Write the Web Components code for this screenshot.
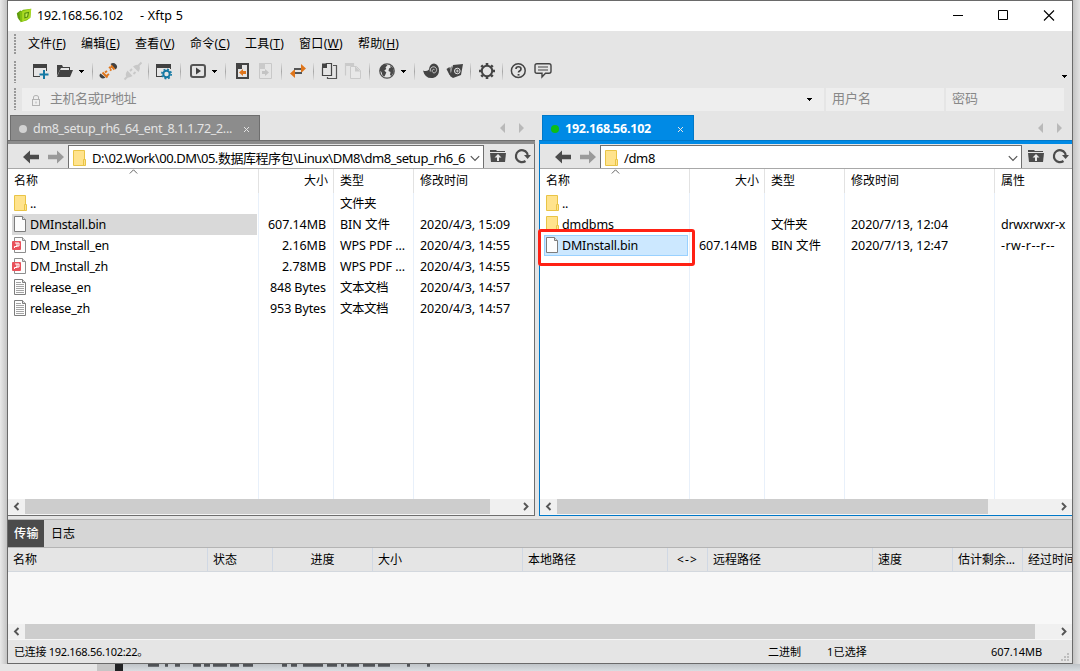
<!DOCTYPE html>
<html lang="zh-CN">
<head>
<meta charset="utf-8">
<title>192.168.56.102 - Xftp 5</title>
<style>
  body {
    margin: 0;
    width: 1080px;
    height: 671px;
    overflow: hidden;
    background: #d9dde0;
    font: 12px/16px "Noto Sans", "Noto Sans CJK SC", sans-serif;
    color: #000;
  }
</style>
</head>
<body>
<desktop-page>
  <app-window>
    <title-bar></title-bar>
    <menu-bar></menu-bar>
    <tool-bar></tool-bar>
    <address-bar></address-bar>
    <split-view>
      <file-pane source="local">
        <pane-tab slot="tab" style="width: 250px"><fit-text w="199">dm8_setup_rh6_64_ent_8.1.1.72_2...</fit-text></pane-tab>
        <fit-text slot="path" w="373">D:\02.Work\00.DM\05.数据库程序包\Linux\DM8\dm8_setup_rh6_6</fit-text>
      </file-pane>
      <file-pane source="remote" active>
        <pane-tab slot="tab" active style="width: 152px"><fit-text w="86">192.168.56.102</fit-text></pane-tab>
        <fit-text slot="path" w="31">/dm8</fit-text>
      </file-pane>
    </split-view>
    <transfer-panel></transfer-panel>
    <status-bar></status-bar>
  </app-window>
</desktop-page>

<script>
const ICONS = {
  logo: `<path d="M2 7l4-3 2 1v11l-3-1-2-3z" fill="#5f9d0c"/><path d="M5 6l4-3 9-1-1 10-4 3-7 2z" fill="#7fbd10"/><path d="M8 5l10-3-1 10-9 4z" fill="#a9d922"/><path d="M11 7l4-1-1 5-3 1z" fill="#c9ee55" stroke="#4f8a0a" stroke-width="1.200"/>`,
  session: `<path d="M3 3h14v7h-1V7H4v8h6v1H3z" fill="#414141"/><path d="M14 9v9M9.5 13.500h9" stroke="#1479a4" stroke-width="2"/>`,
  open: `<path d="M2 15V4h5l1 2h7v3h-1V7H6z" fill="#414141"/><path d="M5 9h13l-3 7H2z" fill="#414141"/>`,
  connect: `<path d="M12.500 3q3-2 5.500.5t-.5 5z" fill="#414141"/><path d="M2.500 12.500q-2 2 0 4t5 0z" fill="#414141"/><path d="M13 4.500l3.500 4M4.500 11.500l5 5M11 6l2 1.500M13.500 9.500l-1.500-1M7 11.500l2-1.500M9 14.500l2-1.500" stroke="#df751b" stroke-width="2"/>`,
  disconnect: `<path d="M10 5.500q4-3 6-1t-.5 6.500zM4.500 9.500q-3 4-1 6t6-.5z" fill="#c8c8c8"/><path d="M1.500 18.500l4-4M15 5l3.500-3.500M7 10l2-2M10.500 13l2-2" stroke="#c8c8c8" stroke-width="1.800"/>`,
  property: `<path d="M2 3h15v5h-1V7H3v8h5v1H2z" fill="#414141"/><circle cx="12.500" cy="13" r="3.200" fill="none" stroke="#1479a4" stroke-width="2"/><circle cx="12.500" cy="13" r="4.700" fill="none" stroke="#1479a4" stroke-width="1.600" stroke-dasharray="1.850 1.850"/>`,
  run: `<rect x="3" y="4" width="14" height="12" rx="2" fill="none" stroke="#555" stroke-width="2"/><path d="M8 6.500l5 3.500-5 3.500z" fill="#414141"/>`,
  docIn: `<path d="M5 7l4-4h7v14H5z" fill="none" stroke="#444" stroke-width="2"/><path d="M4 8V2h6v6z" fill="#444"/><path d="M7 11.500l4-3.500v2h3v3h-3v2z" fill="#df751b"/>`,
  docOut: `<path d="M4.500 7.500l5-5h7v15h-12z" fill="none" stroke="#c8c8c8"/><path d="M4 8V2h6v6z" fill="#cacaca"/><path d="M14 11.500l-4-3.500v2H7v3h3v2z" fill="#c4c4c4"/>`,
  sync: `<path d="M2 12.500l5-4.500v9z" fill="#df751b"/><path d="M18 7.500l-5-4.500v9z" fill="#df751b"/><path d="M6 8h7M7 12h7" stroke="#555" stroke-width="1.800"/>`,
  copy: `<path d="M3.500 6.500l4-4h5v12h-9z" fill="none" stroke="#444" stroke-width="1.200"/><path d="M3 7V2.500h5V7z" fill="#444"/><path d="M14 4.500h3.500v13h-9V16" fill="none" stroke="#555" stroke-width="1.200"/>`,
  paste: `<path d="M2.500 14.500v-12h8V5" fill="none" stroke="#cacaca" stroke-width="1.200"/><path d="M2 2h9v3H2z" fill="#cacaca"/><path d="M7.500 5.500h6l4 4v8h-10z" fill="#e8e8e8" stroke="#cacaca"/><path d="M12 5v5.500h5.500z" fill="#cacaca"/>`,
  globe: `<circle cx="10" cy="10" r="7.200" fill="#e5e5e5" stroke="#505050" stroke-width="1.300"/><path d="M4 5.500l3.500-2.300 3 .8-2 2.500.8 1.500-2 1.500 2 2-1.800 4-2-1-1-3.500-1.800-1.500zM13 4l3 3 .8 4-2.300 4-1.500-1 .5-3-2-1 .5-2.500 1.700-1z" fill="#484848"/>`,
  shell: `<path d="M2 9.500q3.500 1.500 6-1Q8.500 3 13 2.500q5 1 5 7T12 17q-8 1-10-7.500z" fill="#444"/><path d="M9.300 10.500C8.500 6 13 4.500 15 7s-1 6-3 4.500 0-4 1.500-2.800" fill="none" stroke="#d8d8d8" stroke-width=".9"/>`,
  agent: `<path d="M1.500 8l3-2 2 9-2-1zM8 4l10-1-2 11-8 3-3-2z" fill="#444"/><path d="M5 7l2-2-1 8z" fill="#777"/><circle cx="12.300" cy="10" r="2.800" fill="none" stroke="#e5e5e5"/><path d="M12.300 8.500v3M10.800 10h3" stroke="#e5e5e5" stroke-width=".8"/>`,
  gear: `<circle cx="10" cy="10" r="5.200" fill="none" stroke="#444" stroke-width="2"/><path d="M10 2v2.500M10 15.500V18M2 10h2.500M15.500 10H18M4.300 4.300l1.500 1.500M14.200 14.200l1.500 1.500M15.700 4.300l-1.500 1.500M5.800 14.200l-1.500 1.500" stroke="#444" stroke-width="2.600"/>`,
  help: `<circle cx="10.300" cy="9.700" r="6.900" fill="none" stroke="#444" stroke-width="1.500"/><path d="M8 8c0-3 5-3 5 0 0 2-2.500 2-2.500 3.500" fill="none" stroke="#444" stroke-width="1.700"/><path d="M9.600 13h1.900v1.600H9.600z" fill="#444"/>`,
  chat: `<path d="M4 2.800h12q2 0 2 2v5.400q0 2-2 2h-3.500L9 16v-3.800H4q-2 0-2-2V4.800q0-2 2-2z" fill="none" stroke="#444" stroke-width="1.400"/><path d="M5 6h10M5 9h10" stroke="#444" stroke-width="1.200"/>`,
  lock: `<rect x="6.500" y="9.500" width="7" height="6" fill="none" stroke="#b2b2b2"/><path d="M7.500 9V7q0-1.500 2.500-1.500T12.500 7v2M10 11.500v2" fill="none" stroke="#b2b2b2"/>`,
  back: `<path d="M2 10l7-6.500v4.300h9v4.400H9v4.300z" fill="#4c4c4c"/>`,
  forward: `<path d="M18 10l-7-6.500v4.300H2v4.400h9v4.300z" fill="#9a9a9a"/>`,
  folder: `<path d="M4.500 2.500h11v15h-11z" fill="#ffe38d" stroke="#e9c446"/><path d="M14.500 11.500h2v6h-2z" fill="#ffe38d" stroke="#e9c446"/>`,
  up: `<path d="M2 5V3h6l1 1h8v1z" fill="#4c4c4c"/><path d="M2 6h16l-1 9H3z" fill="#4c4c4c"/><path d="M10 7l3.500 3.500H11V14H9v-3.500H6.500z" fill="#e8e8e8"/>`,
  reload: `<path d="M13.500 15A6 6 0 1115 7l.7 2" fill="none" stroke="#4c4c4c" stroke-width="2.200"/><path d="M12 9h7l-3.400 4z" fill="#4c4c4c"/>`,
  file: `<path d="M4.500 2.500h8l3 3v12h-11z" fill="#fdfdfd" stroke="#7d7d7d"/><path d="M12.500 2.500v3h3" fill="#ddd" stroke="#7d7d7d"/>`,
  pdf: `<path d="M4.500 2.500h8l3 3v12h-11z" fill="#fdfdfd" stroke="#8d8d8d"/><path d="M12.500 2.500v3h3" fill="#ddd" stroke="#8d8d8d"/><rect x="2" y="6" width="9" height="9" rx="1" fill="#e9525b"/><path d="M5 8h4v3H6M7 8v3.500H4.500V13" fill="none" stroke="#fff"/>`,
  text: `<path d="M4.500 2.500h8l3 3v12h-11z" fill="#fdfdfd" stroke="#7d7d7d"/><path d="M12.500 2.500v3h3" fill="#ddd" stroke="#7d7d7d"/><path d="M6 5.500h5M6 7.500h8M6 9.500h8M6 11.500h8M6 13.500h8M6 15.500h8" stroke="#a4a4a4"/>`
};

// each row: file icon, then [text, width] for its cells
const LISTS = {
  local: {
    cols: '251px 75px 80px 1fr',
    thumb: 465,
    head: [['名称', 24], ['大小', 24], ['类型', 24], ['修改时间', 48]],
    rows: [
      ['folder', ['..', 6], null, ['文件夹', 36], null],
      ['file', ['DMInstall.bin', 76], ['607.14MB', 58], ['BIN 文件', 50], ['2020/4/3, 15:09', 90]],
      ['pdf', ['DM_Install_en', 79], ['2.16MB', 44], ['WPS PDF ...', 65], ['2020/4/3, 14:55', 90]],
      ['pdf', ['DM_Install_zh', 78], ['2.78MB', 44], ['WPS PDF ...', 65], ['2020/4/3, 14:55', 90]],
      ['text', ['release_en', 61], ['848 Bytes', 56], ['文本文档', 48], ['2020/4/3, 14:57', 90]],
      ['text', ['release_zh', 60], ['953 Bytes', 56], ['文本文档', 48], ['2020/4/3, 14:57', 90]]
    ],
    selected: 1
  },
  remote: {
    cols: '150px 75px 80px 150px 1fr',
    thumb: 431,
    head: [['名称', 24], ['大小', 24], ['类型', 24], ['修改时间', 48], ['属性', 24]],
    rows: [
      ['folder', ['..', 6], null, null, null, null],
      ['folder', ['dmdbms', 52], null, ['文件夹', 36], ['2020/7/13, 12:04', 97], ['drwxrwxr-x', 64]],
      ['file', ['DMInstall.bin', 76], ['607.14MB', 58], ['BIN 文件', 50], ['2020/7/13, 12:47', 97], ['-rw-r--r--', 54]]
    ],
    selected: 2
  }
};

const fit = (cell) => cell ? `<fit-text w="${cell[1]}">${cell[0]}</fit-text>` : '';

class BaseElement extends HTMLElement {
  constructor() {
    super();
    this.attachShadow({ mode: 'open' });
  }
  connectedCallback() {
    this.shadowRoot.innerHTML = this.render();
  }
}

class DesktopPage extends BaseElement {
  render() {
    return `
      <style>
        :host {
          display: block;
          position: relative;
          box-sizing: border-box;
          height: 671px;
          padding-left: 7px;
          background: linear-gradient(90deg, #e9e9e9, #c4c4c4 7px, #c4c4c4 1073px, #e2e2e2 1080px);
        }
        .page {
          position: absolute;
          left: 0;
          right: 0;
          bottom: 0;
          height: 7px;
          background: linear-gradient(#bfc4c8, #d9dde1);
        }
        .page svg { display: block; }
      </style>
      <div class="page">
        <svg width="1080" height="7">
          <path d="M0 0h97v7H0z" fill="#e6e6e6"/>
          <path d="M97 0h18v7H97z" fill="#c5c5c5"/>
          <path d="M115 0h8v7h-8z" fill="#202123"/>
          <path d="M148 1.200h11M165 1.200h3M175 1.200h5M193 1.200h8M204 1.200h6M213 1.200h14M230 1.200h9M243 1.200h10M282 1.200h5M291 1.200h6M303 1.200h20M327 1.200h10M341 1.200h3M347 1.200h12M363 1.200h12M378 1.200h12M407 1.200h3M427 1.200h3" stroke="#33363a" stroke-width="3" opacity=".8"/>
        </svg>
      </div>
      <slot></slot>
    `;
  }
}

class AppWindow extends BaseElement {
  render() {
    return `
      <style>
        :host {
          display: flex;
          flex-direction: column;
          position: relative;
          box-sizing: border-box;
          width: 1066px;
          height: 664px;
          border: 1px solid #6a6a6a;
          background: #e5e5e5;
          overflow: hidden;
        }
      </style>
      <slot></slot>
    `;
  }
}

class TitleBar extends BaseElement {
  render() {
    return `
      <style>
        :host {
          display: flex;
          align-items: center;
          height: 30px;
          background: #fff;
          font-size: 12.500px;
        }
        ui-icon { margin-left: 7px; --size: 18px; }
        .host { margin-left: 4px; }
        .app { margin-left: 17px; }
        .controls { margin-left: auto; display: block; }
      </style>
      <ui-icon name="logo"></ui-icon>
      <fit-text class="host" w="86">192.168.56.102</fit-text>
      <fit-text class="app" w="43">- Xftp 5</fit-text>
      <svg class="controls" width="138" height="30" fill="none" stroke="#000">
        <path d="M19 14.500h10"/>
        <path d="M64.500 9.500h9v9h-9z"/>
        <path d="M110 9.500l10 10M120 9.500l-10 10" stroke-width="1.100"/>
      </svg>
    `;
  }
}

class MenuBar extends BaseElement {
  render() {
    const menus = [['文件', 'F', 38, 53], ['编辑', 'E', 39, 54], ['查看', 'V', 40, 55], ['命令', 'C', 40, 55],
      ['工具', 'T', 39, 54], ['窗口', 'W', 44, 59], ['帮助', 'H', 41, 56]];
    return `
      <style>
        :host {
          display: flex;
          align-items: center;
          height: 26px;
          flex-shrink: 0;
        }
        u { text-underline-offset: 1px; }
        .menu { display: flex; }
        bar-grip { margin-right: 12px; height: 20px; }
      </style>
      <bar-grip></bar-grip>
      ${menus.map(([text, key, w, step]) => `<div class="menu" style="width: ${step}px"><fit-text w="${w}">${text}(<u>${key}</u>)</fit-text></div>`).join('')}
    `;
  }
}

class BarGrip extends BaseElement {
  render() {
    return `
      <style>
        :host {
          display: block;
          width: 2px;
          height: 22px;
          margin-left: 6px;
          flex-shrink: 0;
          background: repeating-linear-gradient(#999 0 2px, transparent 2px 3px);
        }
      </style>
    `;
  }
}

class ToolBar extends BaseElement {
  render() {
    // icon name (or | for a separator, v for a drop arrow) and the gap before it
    const items = [['session', 14], ['open', 5], ['v', 4], ['|', 7], ['connect', 5], ['disconnect', 5], ['|', 5],
      ['property', 5], ['|', 6], ['run', 7], ['v', 4], ['|', 7], ['docIn', 6], ['docOut', 3], ['|', 6], ['sync', 6],
      ['|', 5], ['copy', 5], ['paste', 4], ['|', 6], ['globe', 7], ['v', 4], ['|', 7], ['shell', 6], ['agent', 4],
      ['|', 5], ['gear', 6], ['|', 5], ['help', 5], ['chat', 5]];
    const item = ([name, gap]) => {
      if (name === '|') return `<i style="margin-left: ${gap}px"></i>`;
      if (name === 'v') return `<drop-arrow style="margin-left: ${gap}px"></drop-arrow>`;
      return `<ui-icon name="${name}" style="margin-left: ${gap}px"></ui-icon>`;
    };
    return `
      <style>
        :host {
          display: flex;
          align-items: center;
          height: 29px;
          flex-shrink: 0;
        }
        ui-icon { margin-top: -1px; }
        i {
          width: 1px;
          height: 17px;
          background: linear-gradient(#ddd, #a8a8a8, #ddd);
        }
        .more { margin: 10px 5px 0 auto; }
      </style>
      <bar-grip></bar-grip>
      ${items.map(item).join('')}
      <drop-arrow class="more"></drop-arrow>
    `;
  }
}

class DropArrow extends BaseElement {
  render() {
    return `
      <style>
        :host { display: block; width: 5px; height: 3px; margin-right: 1px; }
        svg { display: block; }
      </style>
      <svg width="5" height="3" shape-rendering="crispEdges"><path d="M0 0h5v1H4v1H3v1H2V2H1V1H0z"/></svg>
    `;
  }
}

class AddressBar extends BaseElement {
  render() {
    return `
      <style>
        :host {
          display: flex;
          align-items: flex-start;
          box-sizing: border-box;
          height: 29px;
          padding-top: 2px;
          flex-shrink: 0;
          color: #888;
          font-size: 13px;
        }
        .field {
          display: flex;
          align-items: center;
          box-sizing: border-box;
          height: 23px;
          background: #eee;
          margin-right: 2px;
          padding-left: 6px;
          width: 118px;
        }
        .field fit-text { margin-bottom: 3px; }
        .host { width: 802px; margin-left: 6px; padding: 0 11px 0 4px; }
        .host fit-text { margin-left: 4px; }
        drop-arrow { margin-left: auto; }
      </style>
      <bar-grip></bar-grip>
      <div class="field host">
        <ui-icon name="lock"></ui-icon>
        <fit-text w="86">主机名或IP地址</fit-text>
        <drop-arrow></drop-arrow>
      </div>
      <div class="field"><fit-text w="39">用户名</fit-text></div>
      <div class="field"><fit-text w="26">密码</fit-text></div>
    `;
  }
}

class SplitView extends BaseElement {
  render() {
    return `
      <style>
        :host {
          display: grid;
          grid-template-columns: 527px 533px;
          gap: 4px;
          height: 401px;
          flex-shrink: 0;
        }
      </style>
      <slot></slot>
    `;
  }
}

class PaneTab extends BaseElement {
  render() {
    return `
      <style>
        :host {
          display: flex;
          align-items: center;
          box-sizing: border-box;
          height: 25px;
          padding: 2px 9px 0 8px;
          border: 1px solid #6e6e6e;
          border-bottom: 0;
          background: #8c8c8c;
          color: #e4e4e4;
          font-size: 12.500px;
          flex-shrink: 0;
        }
        :host([active]) {
          background: #008ae5;
          border-color: #0078c8;
          color: #fff;
          font-weight: bold;
        }
        .dot {
          width: 8px;
          height: 8px;
          margin-right: 6px;
          flex-shrink: 0;
          border-radius: 50%;
          background: #d2d2d2;
        }
        :host([active]) .dot { background: #0dbd17; }
        svg { margin-left: auto; flex-shrink: 0; }
      </style>
      <span class="dot"></span>
      <slot></slot>
      <svg width="7" height="7"><path d="M1 1l5 5M6 1L1 6" stroke="#e4e4e4"/></svg>
    `;
  }
}

class FilePane extends BaseElement {
  render() {
    const source = this.getAttribute('source');
    return `
      <style>
        :host {
          --edge: #8c8c8c;
          --edge-dark: #6e6e6e;
          display: grid;
          grid-template-rows: 25px 4px 371px 1px;
          position: relative;
          min-width: 0;
        }
        :host([active]) {
          --edge: #008ae5;
          --edge-dark: #0078c8;
        }
        .tabs { display: flex; padding: 0 10px 0 2px; align-items: center; }
        :host([active]) .tabs { padding-left: 3px; padding-right: 9px; }
        .tabs svg { margin-left: auto; }
        .line { box-sizing: border-box; background: var(--edge); border-top: 1px solid var(--edge-dark); }
        .main {
          display: grid;
          grid-template-rows: 25px 330px 16px;
          grid-template-columns: minmax(0, 1fr);
          border-right: 1px solid var(--edge-dark);
        }
        :host([active]) .main { border-right: 0; border-left: 1px solid var(--edge-dark); }
        .bottom { background: var(--edge-dark); }
        .mark {
          display: none;
          position: absolute;
          box-sizing: border-box;
          left: -1px;
          top: 114px;
          width: 157px;
          height: 37px;
          border: 3px solid #ff2114;
          border-radius: 3px;
        }
        :host([active]) .mark { display: block; }
      </style>
      <div class="tabs">
        <slot name="tab"></slot>
        <svg width="25" height="10"><path d="M5 0v10L0 5zM19 0v10l5-5z" fill="#b9b9b9"/></svg>
      </div>
      <div class="line"></div>
      <div class="main">
        <path-bar><slot name="path"></slot></path-bar>
        <file-list source="${source}"></file-list>
        <scroll-bar thumb="${LISTS[source].thumb}"></scroll-bar>
      </div>
      <div class="bottom"></div>
      <div class="mark"></div>
    `;
  }
}

class PathBar extends BaseElement {
  render() {
    return `
      <style>
        :host {
          display: flex;
          box-sizing: border-box;
          height: 25px;
          padding-left: 13px;
          border-bottom: 1px solid #a8a8a8;
          background: #e5e5e5;
          font-size: 13px;
        }
        ui-icon { margin-top: 3px; }
        .forward { margin: 3px 2px 0 5px; }
        .path {
          display: flex;
          flex: 1;
          min-width: 0;
          box-sizing: border-box;
          border: 1px solid #707070;
          border-bottom: 0;
          margin-top: 1px;
          background: #fff;
        }
        .path ui-icon { margin-top: 2px; }
        .value { flex: 1; min-width: 0; padding: 4px 0 0 3px; }
        .path svg { margin: 9px 3px 0 2px; flex-shrink: 0; }
        .up { margin-left: 4px; }
        .reload { margin: 2px 2px 0 4px; }
      </style>
      <ui-icon name="back"></ui-icon>
      <ui-icon class="forward" name="forward"></ui-icon>
      <div class="path">
        <ui-icon name="folder"></ui-icon>
        <div class="value"><slot></slot></div>
        <svg width="10" height="7"><path d="M.8 1.200L5 5.400l4.200-4.200" fill="none" stroke="#555" stroke-width="1.200"/></svg>
      </div>
      <ui-icon class="up" name="up"></ui-icon>
      <ui-icon class="reload" name="reload"></ui-icon>
    `;
  }
}

class FileList extends BaseElement {
  render() {
    const source = this.getAttribute('source');
    const list = LISTS[source];
    const row = ([icon, name, ...cells], i) => `
      <div class="row">
        <div class="cell name ${i === list.selected ? 'selected' : ''}"><ui-icon name="${icon}"></ui-icon>${fit(name)}</div>
        ${cells.map((cell) => `<div class="cell">${fit(cell)}</div>`).join('')}
      </div>`;
    return `
      <style>
        :host {
          display: flex;
          flex-direction: column;
          position: relative;
          background: #fff;
          font-size: 12.500px;
        }
        .row {
          display: grid;
          grid-template-columns: ${list.cols};
          height: 21px;
        }
        .head { height: 24px; font-size: 12px; }
        .fill { flex: 1; height: auto; }
        .cell {
          display: flex;
          align-items: center;
          box-sizing: border-box;
          min-width: 0;
          padding-left: 6px;
          border-right: 1px solid #e8f0fa;
          position: relative;
        }
        .head .cell { border-color: #e2e2e2; }
        .cell:last-child { border-right: 0; }
        .cell:nth-child(2) { justify-content: flex-end; padding-right: 7px; }
        .head .cell:nth-child(2) { padding-right: 5px; }
        .name ui-icon { margin-top: -1px; }
        .row .name { padding-left: 2px; }
        .selected { z-index: 0; }
        .selected::before {
          content: "";
          position: absolute;
          z-index: -1;
          inset: 0 1px 0 4px;
          background: ${source === 'local' ? '#d9d9d9' : '#cce8ff'};
          ${source === 'local' ? '' : 'border: 1px solid #99d1ff;'}
        }
        .sort { position: absolute; left: ${source === 'local' ? 121 : 71}px; top: 0; }
      </style>
      <div class="row head">${list.head.map((cell) => `<div class="cell">${fit(cell)}</div>`).join('')}</div>
      ${list.rows.map(row).join('')}
      <div class="row fill">${list.head.map(() => '<div class="cell"></div>').join('')}</div>
      <svg class="sort" width="9" height="5"><path d="M.8 4.500l3.700-3.700 3.700 3.700" fill="none" stroke="#666"/></svg>
    `;
  }
}

class ScrollBar extends BaseElement {
  render() {
    return `
      <style>
        :host {
          display: flex;
          justify-content: space-between;
          height: 15px;
          background: #f0f0f0;
          border-bottom: 1px solid #f6f6f6;
        }
        svg { display: block; }
        .thumb { width: ${this.getAttribute('thumb')}px; margin-right: auto; background: #cdcdcd; }
      </style>
      <svg width="17" height="15"><path d="M10.500 4L7 7.500l3.500 3.500" fill="none" stroke="#555" stroke-width="1.900"/></svg>
      <div class="thumb"></div>
      <svg width="17" height="15"><path d="M7 4l3.500 3.500L7 11" fill="none" stroke="#555" stroke-width="1.900"/></svg>
    `;
  }
}

class TransferPanel extends BaseElement {
  render() {
    const heads = [['名称', 24], ['状态', 24], ['进度', 24], ['大小', 24], ['本地路径', 48], ['&lt;-&gt;', 21],
      ['远程路径', 48], ['速度', 24], ['估计剩余...', 57], ['经过时间', 48]];
    return `
      <style>
        :host {
          display: grid;
          grid-template-rows: 27px 25px 52px 16px;
          margin-top: 3px;
          border-top: 1px solid #b4b4b4;
          flex-shrink: 0;
        }
        .tabs { display: flex; background: #d6d6d6; }
        .tab { display: flex; align-items: center; padding: 0 6px 0 7px; }
        .on { padding: 0 5px 0 6px; background: #4b4b4b; color: #fff; font-weight: 500; }
        .head {
          display: grid;
          grid-template-columns: 200px 65px 100px 150px 145px 40px 165px 80px 70px 1fr;
          box-sizing: border-box;
          border-top: 1px solid #b4b4b4;
          border-bottom: 1px solid #d3d8de;
        }
        .cell {
          display: flex;
          align-items: center;
          box-sizing: border-box;
          min-width: 0;
          padding-left: 5px;
          border-right: 1px solid #d0d8e4;
        }
        .cell:last-child { border-right: 0; overflow: hidden; }
        .cell:nth-child(3), .cell:nth-child(6) { justify-content: center; padding-left: 0; }
        .list { background: #f8f8f8; }
      </style>
      <div class="tabs">
        <div class="tab on"><fit-text w="25">传输</fit-text></div>
        <div class="tab"><fit-text w="24">日志</fit-text></div>
      </div>
      <div class="head">${heads.map((cell) => `<div class="cell">${fit(cell)}</div>`).join('')}</div>
      <div class="list"></div>
      <scroll-bar thumb="1010"></scroll-bar>
    `;
  }
}

class StatusBar extends BaseElement {
  render() {
    return `
      <style>
        :host {
          display: grid;
          grid-template-columns: 754px 59px 164px 1fr;
          align-items: center;
          box-sizing: border-box;
          flex: 1;
          padding: 1px 0 0 6px;
          position: relative;
          font-size: 11px;
        }
        svg { position: absolute; right: 2px; bottom: 2px; }
      </style>
      <fit-text w="134">已连接 192.168.56.102:22。</fit-text>
      <fit-text w="33">二进制</fit-text>
      <fit-text w="40">1已选择</fit-text>
      <fit-text w="51">607.14MB</fit-text>
      <svg width="9" height="8"><path d="M6 0h2v2H6zM3 3h2v2H3zM6 3h2v2H6zM0 6h2v2H0zM3 6h2v2H3zM6 6h2v2H6z" fill="#bdbdbd"/></svg>
    `;
  }
}

class UiIcon extends BaseElement {
  render() {
    return `
      <style>
        :host { display: block; width: var(--size, 20px); height: var(--size, 20px); flex-shrink: 0; }
        svg { display: block; width: 100%; height: 100%; overflow: visible; }
      </style>
      <svg viewBox="0 0 20 20">${ICONS[this.getAttribute('name')]}</svg>
    `;
  }
}

// text set to a given width by spacing its letters
class FitText extends BaseElement {
  render() {
    return `
      <style>
        :host { display: block; flex-shrink: 0; white-space: nowrap; }
        span { display: inline-block; vertical-align: top; }
      </style>
      <span><slot></slot></span>
    `;
  }
  connectedCallback() {
    super.connectedCallback();
    const span = this.shadowRoot.querySelector('span');
    const width = span.getBoundingClientRect().width;
    span.style.letterSpacing = (this.getAttribute('w') - width) / this.textContent.length + 'px';
  }
}

customElements.define('desktop-page', DesktopPage);
customElements.define('app-window', AppWindow);
customElements.define('title-bar', TitleBar);
customElements.define('menu-bar', MenuBar);
customElements.define('bar-grip', BarGrip);
customElements.define('tool-bar', ToolBar);
customElements.define('drop-arrow', DropArrow);
customElements.define('address-bar', AddressBar);
customElements.define('split-view', SplitView);
customElements.define('pane-tab', PaneTab);
customElements.define('file-pane', FilePane);
customElements.define('path-bar', PathBar);
customElements.define('file-list', FileList);
customElements.define('scroll-bar', ScrollBar);
customElements.define('transfer-panel', TransferPanel);
customElements.define('status-bar', StatusBar);
customElements.define('ui-icon', UiIcon);
customElements.define('fit-text', FitText);
</script>
</body>
</html>
